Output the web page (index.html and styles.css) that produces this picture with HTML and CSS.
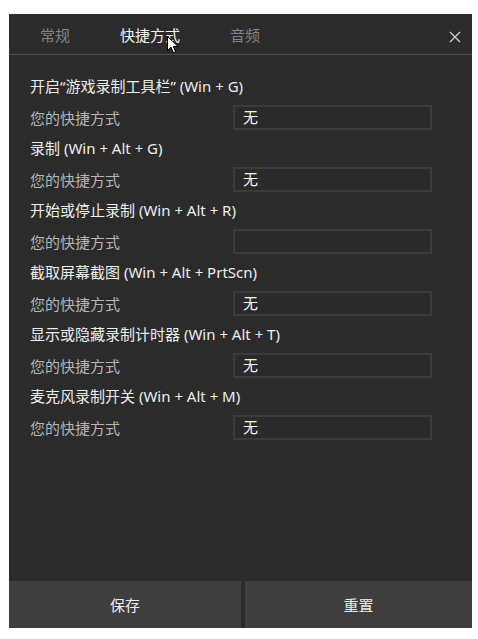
FILE: index.html
```html
<!DOCTYPE html>
<html lang="zh-CN">
<head>
<meta charset="utf-8">
<title>快捷方式</title>
<link rel="stylesheet" href="styles.css">
</head>
<body>
<div class="panel">
  <div class="header">
    <div class="tabs">
      <span class="tab">常规</span>
      <span class="tab active">快捷方式</span>
      <span class="tab">音频</span>
    </div>
    <svg class="close" width="12" height="12" viewBox="0 0 12 12"><path d="M1 1L11 11M11 1L1 11" stroke="#d0d0d0" stroke-width="1.3" fill="none"/></svg>
    <svg class="cursor" width="12" height="18" viewBox="0 0 12 18"><path d="M0.5 0.5L0.5 14.5L4 11.2L6.4 16.8L8.6 15.8L6.3 10.4L11 10.4Z" fill="#ffffff" stroke="#000000" stroke-width="1"/></svg>
  </div>
  <div class="content">
    <div class="item">
      <div class="label">开启“游戏录制工具栏” (Win + G)</div>
      <div class="row"><span class="sub">您的快捷方式</span><div class="input">无</div></div>
    </div>
    <div class="item">
      <div class="label">录制 (Win + Alt + G)</div>
      <div class="row"><span class="sub">您的快捷方式</span><div class="input">无</div></div>
    </div>
    <div class="item">
      <div class="label">开始或停止录制 (Win + Alt + R)</div>
      <div class="row"><span class="sub">您的快捷方式</span><div class="input"></div></div>
    </div>
    <div class="item">
      <div class="label">截取屏幕截图 (Win + Alt + PrtScn)</div>
      <div class="row"><span class="sub">您的快捷方式</span><div class="input">无</div></div>
    </div>
    <div class="item">
      <div class="label">显示或隐藏录制计时器 (Win + Alt + T)</div>
      <div class="row"><span class="sub">您的快捷方式</span><div class="input">无</div></div>
    </div>
    <div class="item">
      <div class="label">麦克风录制开关 (Win + Alt + M)</div>
      <div class="row"><span class="sub">您的快捷方式</span><div class="input">无</div></div>
    </div>
  </div>
  <div class="footer">
    <div class="btn save">保存</div>
    <div class="btn reset">重置</div>
  </div>
</div>
</body>
</html>
```
FILE: styles.css
```css
html, body {
  margin: 0;
  padding: 0;
  background: #ffffff;
}
body {
  padding: 14px 0 0 9px;
  font-family: "Noto Sans", "Noto Sans CJK SC", sans-serif;
}
.panel {
  width: 463px;
  height: 614px;
  background: #2b2b2b;
  display: flex;
  flex-direction: column;
}
.header {
  position: relative;
  height: 40px;
  border-bottom: 1px solid #4e4e4e;
  display: flex;
  align-items: center;
  flex-shrink: 0;
}
.tabs {
  display: flex;
  gap: 50px;
  padding-left: 31px;
  margin-top: 1px;
}
.tab {
  font-size: 15px;
  line-height: 20px;
  color: #838383;
}
.tab.active {
  color: #f2f2f2;
}
.close {
  position: absolute;
  left: 440px;
  top: 17px;
}
.cursor {
  position: absolute;
  left: 158px;
  top: 22px;
}
.content {
  padding: 16px 0 0 21px;
}
.label {
  height: 31px;
  line-height: 31px;
  font-size: 15px;
  color: #eeeeee;
  white-space: nowrap;
}
.row {
  height: 31px;
  display: flex;
  align-items: center;
}
.sub {
  width: 203px;
  font-size: 15px;
  color: #b5b5b5;
}
.input {
  box-sizing: border-box;
  width: 199px;
  height: 25px;
  border: 2px solid #3b3b3b;
  background: #2a2a2a;
  padding-left: 8px;
  font-size: 15px;
  line-height: 21px;
  color: #f4f4f4;
}
.footer {
  margin-top: auto;
  height: 47px;
  display: flex;
  gap: 4px;
}
.btn {
  background: #3e3e3e;
  display: flex;
  align-items: center;
  justify-content: center;
  font-size: 15px;
  color: #ececec;
}
.save {
  width: 232px;
}
.reset {
  flex: 1;
}
```
